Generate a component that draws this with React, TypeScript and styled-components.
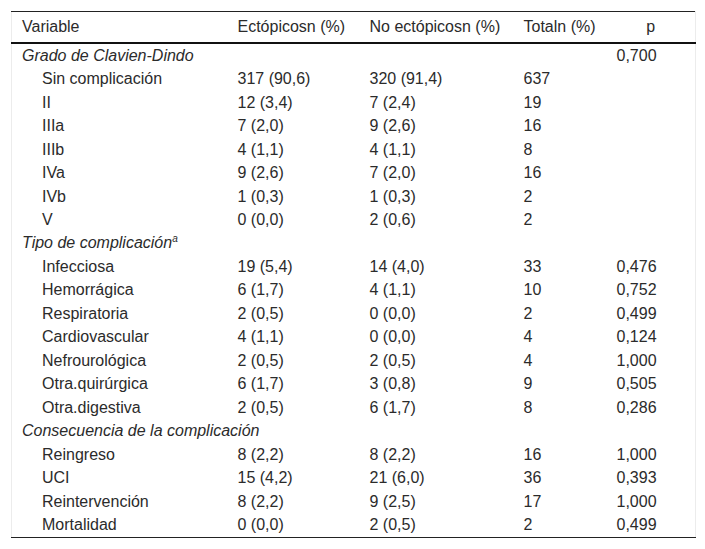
import React from "react";
import styled, { createGlobalStyle } from "styled-components";

type Row = {
    label: string;
    ecto?: string;
    noEcto?: string;
    total?: string;
    p?: string;
    group?: boolean;
    sup?: string;
};

const rows: Row[] = [
    { label: "Grado de Clavien-Dindo", p: "0,700", group: true },
    { label: "Sin complicación", ecto: "317 (90,6)", noEcto: "320 (91,4)", total: "637" },
    { label: "II", ecto: "12 (3,4)", noEcto: "7 (2,4)", total: "19" },
    { label: "IIIa", ecto: "7 (2,0)", noEcto: "9 (2,6)", total: "16" },
    { label: "IIIb", ecto: "4 (1,1)", noEcto: "4 (1,1)", total: "8" },
    { label: "IVa", ecto: "9 (2,6)", noEcto: "7 (2,0)", total: "16" },
    { label: "IVb", ecto: "1 (0,3)", noEcto: "1 (0,3)", total: "2" },
    { label: "V", ecto: "0 (0,0)", noEcto: "2 (0,6)", total: "2" },
    { label: "Tipo de complicación", sup: "a", group: true },
    { label: "Infecciosa", ecto: "19 (5,4)", noEcto: "14 (4,0)", total: "33", p: "0,476" },
    { label: "Hemorrágica", ecto: "6 (1,7)", noEcto: "4 (1,1)", total: "10", p: "0,752" },
    { label: "Respiratoria", ecto: "2 (0,5)", noEcto: "0 (0,0)", total: "2", p: "0,499" },
    { label: "Cardiovascular", ecto: "4 (1,1)", noEcto: "0 (0,0)", total: "4", p: "0,124" },
    { label: "Nefrourológica", ecto: "2 (0,5)", noEcto: "2 (0,5)", total: "4", p: "1,000" },
    { label: "Otra.quirúrgica", ecto: "6 (1,7)", noEcto: "3 (0,8)", total: "9", p: "0,505" },
    { label: "Otra.digestiva", ecto: "2 (0,5)", noEcto: "6 (1,7)", total: "8", p: "0,286" },
    { label: "Consecuencia de la complicación", group: true },
    { label: "Reingreso", ecto: "8 (2,2)", noEcto: "8 (2,2)", total: "16", p: "1,000" },
    { label: "UCI", ecto: "15 (4,2)", noEcto: "21 (6,0)", total: "36", p: "0,393" },
    { label: "Reintervención", ecto: "8 (2,2)", noEcto: "9 (2,5)", total: "17", p: "1,000" },
    { label: "Mortalidad", ecto: "0 (0,0)", noEcto: "2 (0,5)", total: "2", p: "0,499" },
];

const GlobalStyle = createGlobalStyle`
    body {
        margin: 0;
        background: #ffffff;
        font-family: "Liberation Sans", Arial, sans-serif;
    }
`;

const Page = styled.div`
    padding: 11px 0 0 11px;
`;

const Table = styled.table`
    width: 684px;
    border-collapse: collapse;
    table-layout: fixed;
    color: #2b2b2b;
    font-size: 16px;
    border-left: 1px solid #ececec;
    border-right: 1px solid #ececec;
    border-top: 1px solid #222222;
    border-bottom: 1px solid #222222;
`;

const HeadCell = styled.th<{ $center?: boolean }>`
    height: 30px;
    padding: 0 10px;
    font-weight: normal;
    text-align: ${props => props.$center ? "center" : "left"};
    vertical-align: middle;
    border-bottom: 2px solid #111111;
    white-space: nowrap;
`;

const Cell = styled.td<{ $indent?: boolean; $group?: boolean }>`
    height: 23.48px;
    padding: 0 10px 0 ${props => props.$indent ? "30px" : "10px"};
    line-height: 18px;
    vertical-align: middle;
    white-space: nowrap;
    font-style: ${props => props.$group ? "italic" : "normal"};
`;

const Sup = styled.sup`
    font-size: 10px;
    line-height: 0;
    vertical-align: 6px;
`;

export default function App() {
    return (
        <Page>
            <GlobalStyle />
            <Table>
                <colgroup>
                    <col style={{ width: 216 }} />
                    <col style={{ width: 132 }} />
                    <col style={{ width: 154 }} />
                    <col style={{ width: 93 }} />
                    <col style={{ width: 89 }} />
                </colgroup>
                <thead>
                    <tr>
                        <HeadCell>Variable</HeadCell>
                        <HeadCell>Ectópicosn (%)</HeadCell>
                        <HeadCell>No ectópicosn (%)</HeadCell>
                        <HeadCell>Totaln (%)</HeadCell>
                        <HeadCell $center>p</HeadCell>
                    </tr>
                </thead>
                <tbody>
                {
                    rows.map((row, index) => (
                        <tr key={index}>
                            <Cell $group={row.group} $indent={!row.group}>
                                {row.label}
                                {row.sup && <Sup>{row.sup}</Sup>}
                            </Cell>
                            <Cell>{row.ecto}</Cell>
                            <Cell>{row.noEcto}</Cell>
                            <Cell>{row.total}</Cell>
                            <Cell>{row.p}</Cell>
                        </tr>
                    ))
                }
                </tbody>
            </Table>
        </Page>
    );
}
